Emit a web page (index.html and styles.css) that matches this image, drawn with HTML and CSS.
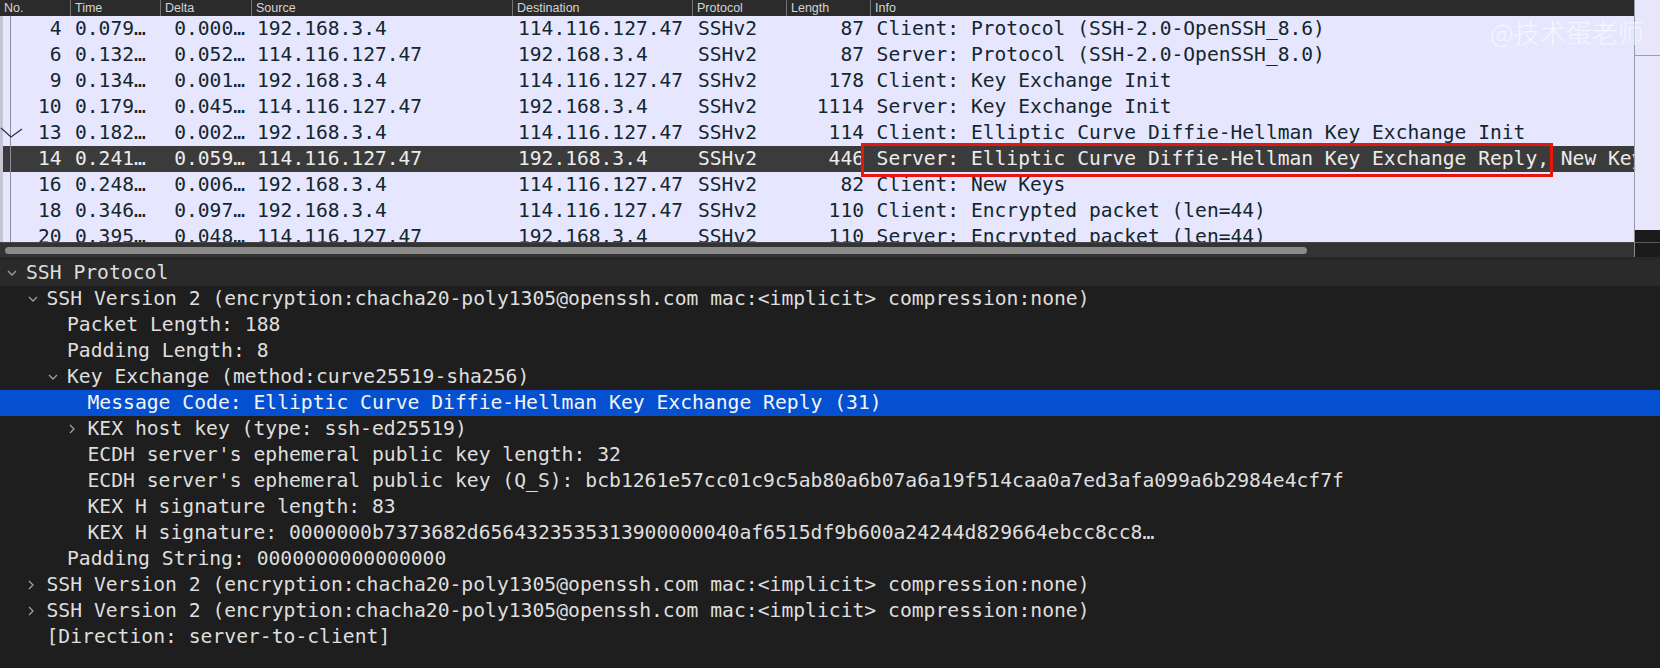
FILE: index.html
```html
<!DOCTYPE html>
<html>
<head>
<meta charset="utf-8">
<link rel="stylesheet" href="styles.css">
</head>
<body>
<div class="app">
  <div class="top">
    <div class="left-col">
      <div class="list">
        <div class="hdr">
          <div class="hc first">No.</div>
          <div class="hc">Time</div>
          <div class="hc">Delta</div>
          <div class="hc">Source</div>
          <div class="hc">Destination</div>
          <div class="hc">Protocol</div>
          <div class="hc">Length</div>
          <div class="hc">Info</div>
        </div>
        <div class="rows">
          <div class="row"><span class="c no">4</span><span class="c t">0.079…</span><span class="c d">0.000…</span><span class="c s">192.168.3.4</span><span class="c s">114.116.127.47</span><span class="c s">SSHv2</span><span class="c len">87</span><span class="c info">Client: Protocol (SSH-2.0-OpenSSH_8.6)</span></div>
          <div class="row"><span class="c no">6</span><span class="c t">0.132…</span><span class="c d">0.052…</span><span class="c s">114.116.127.47</span><span class="c s">192.168.3.4</span><span class="c s">SSHv2</span><span class="c len">87</span><span class="c info">Server: Protocol (SSH-2.0-OpenSSH_8.0)</span></div>
          <div class="row"><span class="c no">9</span><span class="c t">0.134…</span><span class="c d">0.001…</span><span class="c s">192.168.3.4</span><span class="c s">114.116.127.47</span><span class="c s">SSHv2</span><span class="c len">178</span><span class="c info">Client: Key Exchange Init</span></div>
          <div class="row"><span class="c no">10</span><span class="c t">0.179…</span><span class="c d">0.045…</span><span class="c s">114.116.127.47</span><span class="c s">192.168.3.4</span><span class="c s">SSHv2</span><span class="c len">1114</span><span class="c info">Server: Key Exchange Init</span></div>
          <div class="row"><span class="c no">13</span><span class="c t">0.182…</span><span class="c d">0.002…</span><span class="c s">192.168.3.4</span><span class="c s">114.116.127.47</span><span class="c s">SSHv2</span><span class="c len">114</span><span class="c info">Client: Elliptic Curve Diffie-Hellman Key Exchange Init</span></div>
          <div class="row sel"><span class="c no">14</span><span class="c t">0.241…</span><span class="c d">0.059…</span><span class="c s">114.116.127.47</span><span class="c s">192.168.3.4</span><span class="c s">SSHv2</span><span class="c len">446</span><span class="c info">Server: Elliptic Curve Diffie-Hellman Key Exchange Reply, New Keys</span></div>
          <div class="row"><span class="c no">16</span><span class="c t">0.248…</span><span class="c d">0.006…</span><span class="c s">192.168.3.4</span><span class="c s">114.116.127.47</span><span class="c s">SSHv2</span><span class="c len">82</span><span class="c info">Client: New Keys</span></div>
          <div class="row"><span class="c no">18</span><span class="c t">0.346…</span><span class="c d">0.097…</span><span class="c s">192.168.3.4</span><span class="c s">114.116.127.47</span><span class="c s">SSHv2</span><span class="c len">110</span><span class="c info">Client: Encrypted packet (len=44)</span></div>
          <div class="row"><span class="c no">20</span><span class="c t">0.395…</span><span class="c d">0.048…</span><span class="c s">114.116.127.47</span><span class="c s">192.168.3.4</span><span class="c s">SSHv2</span><span class="c len">110</span><span class="c info">Server: Encrypted packet (len=44)</span></div>
        </div>
        <div class="gutter-strip"></div>
        <div class="rel-line"></div>
        <svg class="rel-mark" width="24" height="16" viewBox="0 0 24 16"><polyline points="1,3 11,12 22,4" fill="none" stroke="#2a2f3a" stroke-width="1.2"/></svg>
        <div class="redbox"></div>
      </div>
      <div class="hscroll"><div class="thumb"></div></div>
    </div>
    <div class="right-col">
      <div class="vstrip"><div class="vmark"></div></div>
      <div class="corner"><div class="corner-line"></div></div>
    </div>
    <div class="watermark">@技术蛋老师</div>
  </div>
  <div class="gap"></div>
  <div class="tree">
    <div class="tr lv0 parent"><span class="arr"><svg width="10" height="6" viewBox="0 0 10 6"><polyline points="1,1 5,5 9,1" fill="none" stroke="#a0a0a0" stroke-width="1.3"/></svg></span><span class="tx">SSH Protocol</span></div>
    <div class="tr lv1"><span class="arr"><svg width="10" height="6" viewBox="0 0 10 6"><polyline points="1,1 5,5 9,1" fill="none" stroke="#a0a0a0" stroke-width="1.3"/></svg></span><span class="tx">SSH Version 2 (encryption:chacha20-poly1305@openssh.com mac:&lt;implicit&gt; compression:none)</span></div>
    <div class="tr lv2"><span class="arr"></span><span class="tx">Packet Length: 188</span></div>
    <div class="tr lv2"><span class="arr"></span><span class="tx">Padding Length: 8</span></div>
    <div class="tr lv2"><span class="arr"><svg width="10" height="6" viewBox="0 0 10 6"><polyline points="1,1 5,5 9,1" fill="none" stroke="#a0a0a0" stroke-width="1.3"/></svg></span><span class="tx">Key Exchange (method:curve25519-sha256)</span></div>
    <div class="tr lv3 tsel"><span class="arr"></span><span class="tx">Message Code: Elliptic Curve Diffie-Hellman Key Exchange Reply (31)</span></div>
    <div class="tr lv3"><span class="arr"><svg width="6" height="10" viewBox="0 0 6 10"><polyline points="1,1 5,5 1,9" fill="none" stroke="#a0a0a0" stroke-width="1.3"/></svg></span><span class="tx">KEX host key (type: ssh-ed25519)</span></div>
    <div class="tr lv3"><span class="arr"></span><span class="tx">ECDH server's ephemeral public key length: 32</span></div>
    <div class="tr lv3"><span class="arr"></span><span class="tx">ECDH server's ephemeral public key (Q_S): bcb1261e57cc01c9c5ab80a6b07a6a19f514caa0a7ed3afa099a6b2984e4cf7f</span></div>
    <div class="tr lv3"><span class="arr"></span><span class="tx">KEX H signature length: 83</span></div>
    <div class="tr lv3"><span class="arr"></span><span class="tx">KEX H signature: 0000000b7373682d6564323535313900000040af6515df9b600a24244d829664ebcc8cc8…</span></div>
    <div class="tr lv2"><span class="arr"></span><span class="tx">Padding String: 0000000000000000</span></div>
    <div class="tr lv1"><span class="arr"><svg width="6" height="10" viewBox="0 0 6 10"><polyline points="1,1 5,5 1,9" fill="none" stroke="#a0a0a0" stroke-width="1.3"/></svg></span><span class="tx">SSH Version 2 (encryption:chacha20-poly1305@openssh.com mac:&lt;implicit&gt; compression:none)</span></div>
    <div class="tr lv1"><span class="arr"><svg width="6" height="10" viewBox="0 0 6 10"><polyline points="1,1 5,5 1,9" fill="none" stroke="#a0a0a0" stroke-width="1.3"/></svg></span><span class="tx">SSH Version 2 (encryption:chacha20-poly1305@openssh.com mac:&lt;implicit&gt; compression:none)</span></div>
    <div class="tr lv1"><span class="arr"></span><span class="tx">[Direction: server-to-client]</span></div>
  </div>
</div>
</body>
</html>
```

FILE: styles.css
```css
* { box-sizing: border-box; }
html, body { margin: 0; padding: 0; }
body {
  width: 1660px;
  height: 668px;
  background: #1e1e1e;
  overflow: hidden;
  font-family: "DejaVu Sans Mono", monospace;
}
.app { position: relative; width: 1660px; height: 668px; }

.top { position: relative; display: flex; height: 257px; }
.left-col { width: 1634px; display: flex; flex-direction: column; }
.right-col { width: 26px; display: flex; flex-direction: column; }

.list {
  position: relative;
  height: 242px;
  background: #e7e6ff;
  overflow: hidden;
}
.hdr {
  display: grid;
  grid-template-columns: 70px 90px 91px 261px 180px 94px 84px 1fr;
  height: 16px;
  background: #2b2b2b;
}
.hc {
  font-family: "Liberation Sans", Arial, sans-serif;
  font-size: 12.5px;
  line-height: 16px;
  color: #d4d4d4;
  padding-left: 4px;
  border-left: 1px solid #747474;
  white-space: nowrap;
}
.hc.first { border-left: none; padding-left: 4px; }

.rows { display: flex; flex-direction: column; }
.row {
  display: grid;
  grid-template-columns: 70px 90px 91px 261px 180px 94px 84px 1fr;
  height: 26px;
  font-size: 19.6px;
  line-height: 26px;
  color: #12272e;
  white-space: nowrap;
}
.row.sel { background: #3b3b3b; color: #ececec; }
.c { overflow: hidden; }
.no { text-align: right; padding-right: 8.5px; }
.t { padding-left: 5px; }
.d { text-align: right; padding-right: 6px; }
.s { padding-left: 6px; }
.len { text-align: right; padding-right: 6px; }
.info { padding-left: 6.6px; overflow: hidden; }

.gutter-strip {
  position: absolute; left: 0; top: 16px; width: 3px; bottom: 0;
  background: #c6c5d6;
}
.rel-line {
  position: absolute; left: 10px; top: 16px; width: 1px; bottom: 0;
  background: #8e8ea2;
}
.rel-mark { position: absolute; left: 0; top: 125px; }
.redbox {
  position: absolute;
  left: 861px; top: 143px;
  width: 692px; height: 34px;
  border: 3.5px solid #e8150f;
}

.hscroll {
  height: 15px;
  background: #333333;
  border-top: 1px solid #474747;
  padding: 4px 0 0 5px;
}
.thumb {
  width: 1302px; height: 7px;
  border-radius: 4px;
  background: #8a8a8a;
}

.vstrip {
  position: relative;
  height: 230px;
  background: #e7e6fb;
  border-left: 1px solid #9a9aa4;
}
.vmark {
  position: absolute; left: 0; right: 0; top: 55px; height: 1px;
  background: #8fa2bd;
}
.corner {
  position: relative;
  height: 27px;
  background: #1b1b1b;
  border-left: 1px solid #8a8a8a;
}
.corner-line {
  position: absolute; left: 0; right: 0; top: 12px; height: 1px;
  background: #5a5a5a;
}

.watermark {
  position: absolute;
  left: 1490px; top: 14px;
  font-family: "Noto Sans CJK SC", sans-serif;
  font-weight: 300;
  font-size: 26px;
  line-height: 36px;
  color: rgba(255, 255, 255, 0.62);
  white-space: nowrap;
}

.gap { height: 3px; background: #262626; }

.tree { display: flex; flex-direction: column; }
.tr {
  display: flex;
  align-items: center;
  height: 26px;
  font-size: 19.7px;
  color: #dedede;
  white-space: nowrap;
}
.tr.parent { background: #2a2a2a; }
.tr.tsel { background: #0450d0; color: #f4f4f4; }
.lv0 { padding-left: 6px; }
.lv1 { padding-left: 26.5px; }
.lv2 { padding-left: 47px; }
.lv3 { padding-left: 67.5px; }
.arr {
  width: 20px;
  height: 26px;
  display: flex;
  align-items: center;
  padding-left: 1px;
  flex-shrink: 0;
}
.arr svg { display: block; }
.tx { line-height: 26px; }
```
